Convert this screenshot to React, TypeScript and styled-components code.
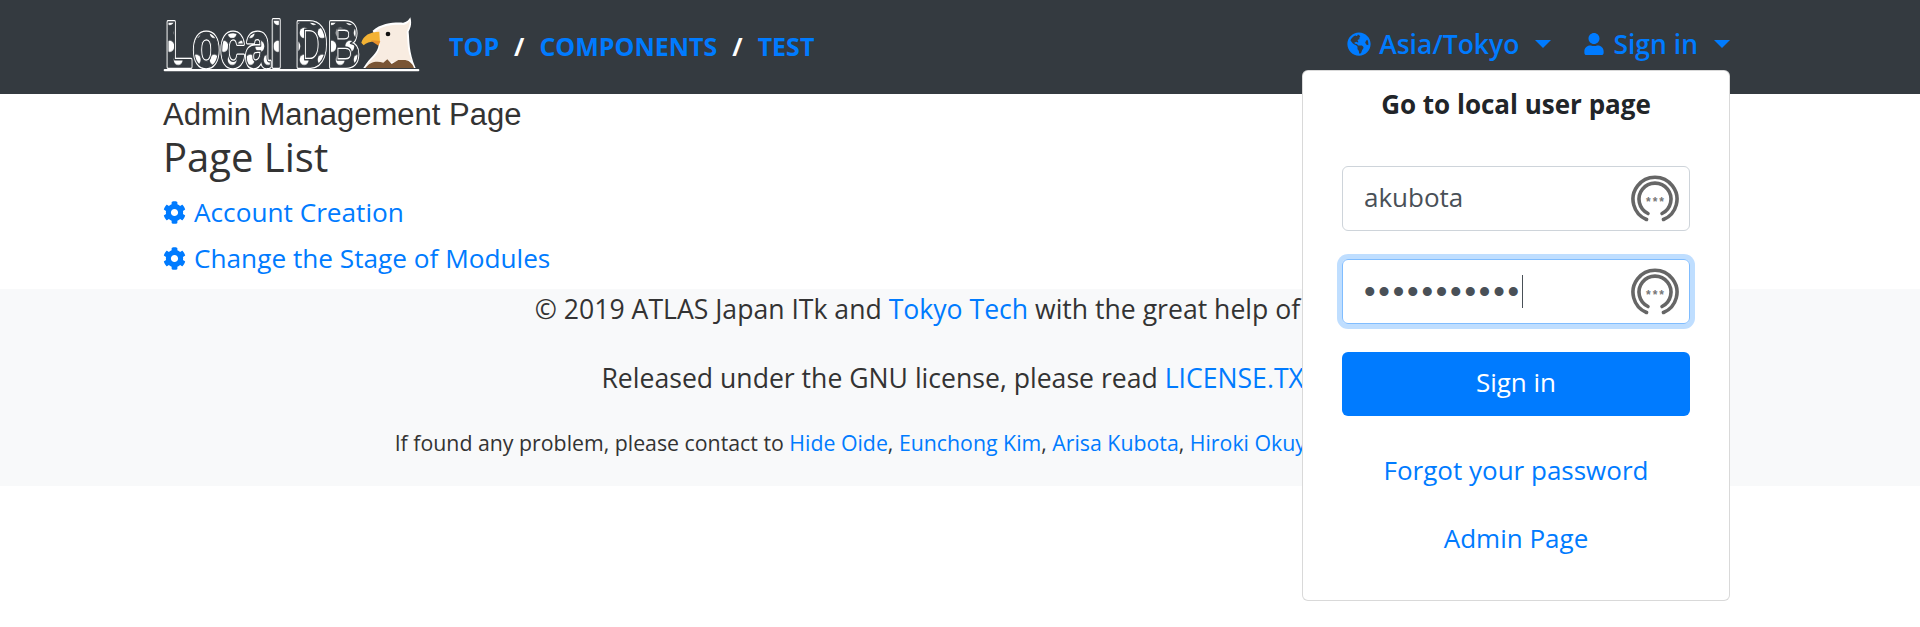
import React from 'react';
import styled, { createGlobalStyle } from 'styled-components';
import { FaCog, FaGlobeAmericas, FaUser } from 'react-icons/fa';

const BLUE = '#007bff';
const BODY_FONT = '"Open Sans", "Liberation Sans", sans-serif';

const Logo = () => (
  <LogoSvg viewBox="0 0 258 58" width="258" height="58">
    <defs>
      <pattern id="mottle" width="60" height="62" patternUnits="userSpaceOnUse">
        <rect width="60" height="62" fill="#343a40" />
        <ellipse cx="16" cy="15" rx="15" ry="13" fill="#fff" />
        <ellipse cx="44" cy="46" rx="15" ry="12" fill="#fff" />
      </pattern>
      <LogoWord id="logo-word" transform="translate(45 170) scale(0.9 1.3)">
        Local DB
      </LogoWord>
    </defs>
    <g transform="translate(-13 -6) scale(0.3333)">
      <rect x="41" y="177" width="767" height="7" rx="3" fill="#fff" />
      <path
        d="M668 62C695 36 745 36 760 38C772 36 778 28 781 22C788 45 778 60 776 65C779 92 776 125 797 174L640 174C660 140 684 130 686 104Z"
        fill="#fff"
      />
      <path
        d="M675 65C700 43 745 43 761 45C770 43 776 37 779 32C782 46 772 60 770 66C773 92 771 122 785 150L650 165C672 140 690 132 690 100Z"
        fill="#f8ece1"
      />
      <path d="M646 174C660 155 680 152 700 158L712 148L725 162L745 150L766 150C780 152 790 165 792 174Z" fill="#7a5535" />
      <path d="M634 98C640 76 660 66 688 65L690 96C670 92 650 96 641 106Z" fill="#f3b234" />
      <path d="M664 92C672 91 682 92 691 94L686 107C678 102 670 97 664 92Z" fill="#e8912c" />
      <circle cx="714" cy="72" r="7" fill="#111" />
      <use href="#logo-word" fill="#fff" stroke="#fff" strokeWidth="9" strokeLinejoin="round" />
      <use href="#logo-word" fill="url(#mottle)" stroke="#343a40" strokeWidth="3" strokeLinejoin="round" />
    </g>
  </LogoSvg>
);

const PasswordKey = () => (
  <KeyIcon viewBox="0 0 48 48" width="48" height="48">
    <g fill="none" stroke="#666" strokeWidth="3.6" strokeLinecap="round">
      <path d="M15.5 44.5A22 22 0 1 1 32.5 44.5" />
      <path d="M17 38.5A16 16 0 1 1 31 38.5" />
    </g>
    <KeyStars x="25" y="31" textAnchor="middle">
      ***
    </KeyStars>
  </KeyIcon>
);

export default function App() {
  return (
    <Page>
      <GlobalStyle />
      <NavBar>
        <NavLeft>
          <Logo />
          <NavLinks>
            <NavLink href="#">TOP</NavLink>
            <Slash>/</Slash>
            <NavLink href="#">COMPONENTS</NavLink>
            <Slash>/</Slash>
            <NavLink href="#">TEST</NavLink>
          </NavLinks>
        </NavLeft>
        <NavRight>
          <MenuToggle href="#">
            <FaGlobeAmericas size={24} />
            Asia/Tokyo
            <Caret />
          </MenuToggle>
          <MenuToggle href="#">
            <FaUser size={22} />
            Sign in
            <Caret />
          </MenuToggle>
          <Dropdown>
            <DropdownTitle>Go to local user page</DropdownTitle>
            <Field>
              <FieldValue>akubota</FieldValue>
              <PasswordKey />
            </Field>
            <Field $focused>
              <Dots>•••••••••••</Dots>
              <Cursor />
              <PasswordKey />
            </Field>
            <SubmitButton type="button">Sign in</SubmitButton>
            <DropdownLink href="#">Forgot your password</DropdownLink>
            <DropdownLink href="#">Admin Page</DropdownLink>
          </Dropdown>
        </NavRight>
      </NavBar>
      <Main>
        <Lead>Admin Management Page</Lead>
        <PageTitle>Page List</PageTitle>
        <PageLink href="#">
          <FaCog size={23} />
          Account Creation
        </PageLink>
        <PageLink href="#">
          <FaCog size={23} />
          Change the Stage of Modules
        </PageLink>
      </Main>
      <Footer>
        <FooterLine>
          © 2019 ATLAS Japan ITk and <a href="#">Tokyo Tech</a> with the great help of
          <Covered $width={85} />
        </FooterLine>
        <FooterLine>
          Released under the GNU license, please read <a href="#">LICENSE.TXT</a>
        </FooterLine>
        <FooterSmall>
          If found any problem, please contact to <a href="#">Hide Oide</a>, <a href="#">Eunchong Kim</a>,{' '}
          <a href="#">Arisa Kubota</a>, <a href="#">Hiroki Okuyama</a>
          <Covered $width={176} />
        </FooterSmall>
      </Footer>
    </Page>
  );
}

const GlobalStyle = createGlobalStyle`
  html, body {
    margin: 0;
    background: #fff;
    font-family: ${BODY_FONT};
    color: #333;
  }
  a {
    color: ${BLUE};
    text-decoration: none;
  }
`;

const Page = styled.div`
  min-height: 627px;
`;

const NavBar = styled.nav`
  align-items: center;
  background: #343a40;
  display: flex;
  height: 94px;
  justify-content: space-between;
  padding: 0 190px 0 163px;
`;

const NavLeft = styled.div`
  align-items: center;
  display: flex;
  gap: 28px;
`;

const LogoSvg = styled.svg`
  display: block;
  margin-bottom: 4px;
  overflow: visible;
`;

const LogoWord = styled.text`
  font-family: 'Liberation Sans', sans-serif;
  font-size: 150px;
  font-weight: 700;
`;

const NavLinks = styled.div`
  align-items: center;
  display: flex;
  gap: 15px;
  padding-bottom: 2px;
`;

const NavLink = styled.a`
  font-size: 25px;
  font-weight: 700;
`;

const Slash = styled.span`
  color: #fff;
  font-size: 25px;
  font-weight: 700;
`;

const NavRight = styled.div`
  align-items: center;
  display: flex;
  gap: 32px;
  position: relative;
  top: -3px;
`;

const MenuToggle = styled.a`
  align-items: center;
  display: flex;
  font-size: 26.5px;
  font-weight: 600;
  gap: 8px;
`;

const Caret = styled.span`
  border-left: 8px solid transparent;
  border-right: 8px solid transparent;
  border-top: 8px solid ${BLUE};
  margin-left: 8px;
`;

const Dropdown = styled.div`
  align-items: center;
  background: #fff;
  border: 1px solid rgba(0, 0, 0, 0.15);
  border-radius: 6px;
  box-sizing: border-box;
  display: flex;
  flex-direction: column;
  height: 531px;
  padding: 16px 39px 0;
  position: absolute;
  right: 0;
  top: 44px;
  width: 428px;
  z-index: 2;
`;

const DropdownTitle = styled.h5`
  color: #212529;
  font-size: 26px;
  font-weight: 700;
  line-height: 34px;
  margin: 0 0 45px;
`;

const Field = styled.div<{ $focused?: boolean }>`
  align-items: center;
  border: 1px solid ${p => (p.$focused ? '#80bdff' : '#ced4da')};
  border-radius: 6px;
  box-shadow: ${p => (p.$focused ? '0 0 0 5px rgba(0, 123, 255, 0.25)' : 'none')};
  box-sizing: border-box;
  color: #495057;
  display: flex;
  flex-shrink: 0;
  height: 65px;
  margin-bottom: 28px;
  padding: 0 10px 0 21px;
  width: 100%;
`;

const FieldValue = styled.span`
  flex-grow: 1;
  font-size: 26px;
  padding-bottom: 4px;
`;

const Dots = styled.span`
  font-family: 'Liberation Sans', sans-serif;
  font-size: 33px;
  letter-spacing: 2.8px;
  line-height: 1;
`;

const Cursor = styled.span`
  background: #495057;
  height: 33px;
  margin-right: auto;
  width: 1px;
`;

const KeyIcon = styled.svg`
  display: block;
  flex-shrink: 0;
`;

const KeyStars = styled.text`
  fill: #777;
  font-family: 'Liberation Sans', sans-serif;
  font-size: 12px;
  font-weight: 700;
  letter-spacing: 2px;
`;

const SubmitButton = styled.button`
  background: ${BLUE};
  border: 0;
  border-radius: 6px;
  color: #fff;
  flex-shrink: 0;
  font-family: ${BODY_FONT};
  font-size: 26px;
  height: 64px;
  margin-bottom: 37px;
  padding: 0 0 4px;
  width: 100%;
`;

const DropdownLink = styled.a`
  font-size: 26px;
  line-height: 34px;
  margin-bottom: 34px;
`;

const Main = styled.main`
  height: 195px;
  padding: 0 163px;
`;

const Lead = styled.div`
  font-family: 'Liberation Sans', sans-serif;
  font-size: 31px;
  line-height: 40px;
  padding-top: 1px;
`;

const PageTitle = styled.h1`
  font-size: 40px;
  font-weight: 400;
  line-height: 44px;
  margin: 0 0 10px;
`;

const PageLink = styled.a`
  align-items: center;
  display: flex;
  font-size: 26.2px;
  gap: 8px;
  height: 46px;
`;

const Footer = styled.footer`
  background: #f8f9fa;
  box-sizing: border-box;
  height: 197px;
  padding-top: 1px;
  text-align: center;
`;

const FooterLine = styled.p`
  font-size: 26.6px;
  line-height: 38px;
  margin: 0 0 31px;
`;

const FooterSmall = styled.p`
  font-size: 21.3px;
  line-height: 30px;
  margin: 0;
`;

const Covered = styled.span<{ $width: number }>`
  display: inline-block;
  width: ${p => p.$width}px;
`;
